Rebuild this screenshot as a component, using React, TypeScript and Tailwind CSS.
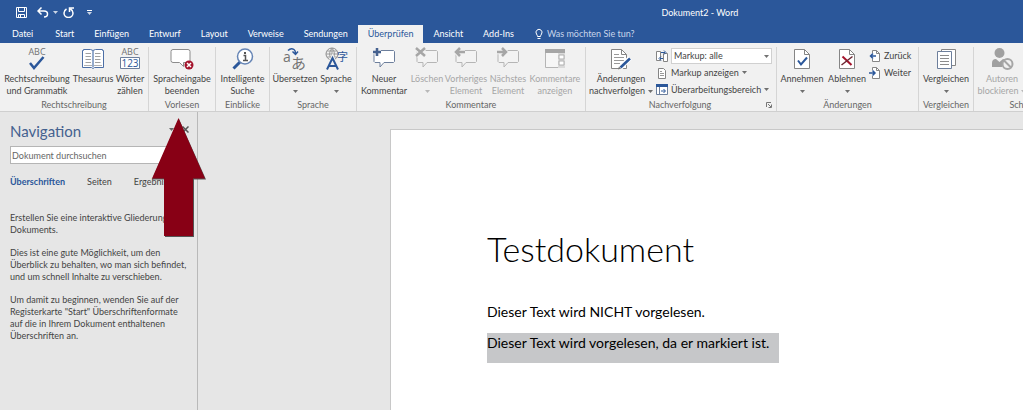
import type { ReactNode } from 'react'

const BLUE = '#2b579a'
const GREY = '#737373'
const CJK = '"Noto Sans CJK JP", sans-serif'

function Caret({ className = '' }: { className?: string }) {
    return (
        <svg viewBox="0 0 5 3" className={`h-[3px] w-[5px] shrink-0 opacity-75 ${className}`} fill="currentColor" aria-hidden="true">
            <path d="M0 0h5L2.5 3z" />
        </svg>
    )
}

function Icon({ children, w = 24, h = 24 }: { children: ReactNode; w?: number; h?: number }) {
    return (
        <svg width={w} height={h} viewBox={`0 0 ${w} ${h}`} fill="none" className="shrink-0 overflow-visible" aria-hidden="true">
            {children}
        </svg>
    )
}

/* ---------- ribbon icons ---------- */

function SpellingIcon() {
    return (
        <Icon>
            <text x="12" y="8" textAnchor="middle" fontSize="9" fill={GREY} className="font-['Open_Sans',sans-serif]">ABC</text>
            <path d="M5 16l4 5 9.500-11" stroke={BLUE} strokeWidth="2.500" />
        </Icon>
    )
}

function ThesaurusIcon() {
    return (
        <Icon>
            <path d="M1.500 3.500h1v-1h7l2.500 1 2.500-1h7v1h1v17h-9l-1.500 1-1.500-1h-9z" fill="#fff" stroke="#4d6fa6" />
            <path d="M12 4v16" stroke={BLUE} />
            <path d="M4.500 6.500H10M4.500 9.500H10M4.500 12.500H10M4.500 15.500H10M14 6.500h5.500M14 9.500h5.500M14 12.500h5.500M14 15.500h5.500" stroke="#a0a0a0" />
            <path d="M3 18.500h8M13 18.500h8" stroke="#b0b0b0" />
        </Icon>
    )
}

function WordCountIcon() {
    return (
        <Icon>
            <text x="12" y="8" textAnchor="middle" fontSize="9" fill={GREY} className="font-['Open_Sans',sans-serif]">ABC</text>
            <path d="M2.500 10.500h19v11h-19z" fill="#fff" stroke="#6d7f9c" />
            <text x="12" y="20" textAnchor="middle" fontSize="10" fill={BLUE} className="font-['Open_Sans',sans-serif]">123</text>
        </Icon>
    )
}

function SpeechIcon() {
    return (
        <Icon>
            <path d="M3 2.500h15q2 0 2 2v9q0 2-2 2h-4.500v4l-4-4H3q-2 0-2-2v-9q0-2 2-2z" fill="#fff" stroke="#8c8c8c" />
            <circle cx="19" cy="18" r="4.500" fill="#a4142c" />
            <path d="M17 16l4 4M21 16l-4 4" stroke="#fff" strokeWidth="1.500" />
        </Icon>
    )
}

function LookupIcon() {
    return (
        <Icon>
            <path d="M2.500 21.500l7-7" stroke={BLUE} strokeWidth="3" />
            <circle cx="14" cy="9.500" r="7.500" fill="#fff" stroke="#6685b5" strokeWidth="1.500" />
            <path d="M12.500 8.500h2V13M12 13.500h5" stroke="#555" strokeWidth="1.500" />
            <path d="M13 5h2v2h-2z" fill="#555" />
        </Icon>
    )
}

function TranslateIcon() {
    return (
        <Icon>
            <text x="0" y="15" fontSize="14" fill={GREY} className="font-['Open_Sans',sans-serif]">a</text>
            <text x="8" y="22" fontSize="15" fill={GREY} fontFamily={CJK}>あ</text>
            <path d="M5 3.500q3-3 6-1 1.500 1 1.500 4M9.500 4.500l3 3 2.500-3" stroke={BLUE} strokeWidth="1.500" />
        </Icon>
    )
}

function LanguageIcon() {
    return (
        <Icon>
            <circle cx="8" cy="7" r="6" stroke="#8c8c8c" />
            <path d="M2 7h12M3 4h10M3 10h10M8 1v12M8 1q-5 6 0 12M8 1q5 6 0 12" stroke="#9c9c9c" />
            <path d="M3 23L8.500 11 14 23M5.500 19h6" stroke="#f1f1f1" strokeWidth="4" />
            <path d="M3 22.500L8.500 11 14 22.500M5 19h7" stroke={BLUE} strokeWidth="2" />
            <text x="13" y="14" fontSize="11" fill={BLUE} fontFamily={CJK}>字</text>
        </Icon>
    )
}

function CommentIcon({ mark }: { mark: 'new' | 'delete' | 'previous' | 'next' }) {
    const active = mark === 'new'
    const marks = {
        new: 'M5 1v8M1 5h8',
        delete: 'M1 1l9 8M10 1L1 9',
        previous: 'M11 5H2M6 1L2 5l4 4',
        next: 'M1 5h9M6 1l4 4-4 4',
    }
    return (
        <Icon>
            <path d="M4 3.500h17.500l1 1v10l-1 1H12l-4 4.500v-4.500H3l-1-1v-10z" fill={active ? '#fff' : '#f3f3f3'} stroke={active ? '#6d7f9c' : '#b5b5b5'} />
            <path d={marks[mark]} stroke="#f1f1f1" strokeWidth="4.500" />
            <path d={marks[mark]} stroke={active ? '#45618f' : '#a6a6a6'} strokeWidth="2.500" />
        </Icon>
    )
}

function ShowCommentsIcon() {
    return (
        <Icon>
            <path d="M2.500 2.500h19v18h-19z" fill="#f6f6f6" stroke="#b5b5b5" />
            <path d="M2 2h20v4H2z" fill="#a6a6a6" />
            <path d="M15 6h7v15h-7z" fill="#dadada" />
            <path d="M16 8h5v4h-5zM16 14h5v4h-5z" fill="#fff" stroke="#b0b0b0" />
        </Icon>
    )
}

function Sheet() {
    return (
        <>
            <path d="M4.500 2.500h10l5 5v14h-15z" fill="#fff" stroke="#858585" />
            <path d="M14.500 2.500v5h5" stroke="#858585" />
        </>
    )
}

function TrackIcon() {
    return (
        <Icon>
            <path d="M2.500 2.500h10l5 5v14h-15z" fill="#fff" stroke="#858585" />
            <path d="M12.500 2.500v5h5" stroke="#858585" />
            <path d="M5 7.500h5M5 10.500h10M5 13.500h10M5 16.500h6" stroke="#999" />
            <path d="M11 21l10-10" stroke="#fff" strokeWidth="5" />
            <path d="M11.500 20.500l9.500-9" stroke={BLUE} strokeWidth="2.500" />
            <path d="M9 22.500l1-3 2 2z" fill="#777" />
        </Icon>
    )
}

function AcceptIcon() {
    return (
        <Icon>
            <Sheet />
            <path d="M8 13.500l3 4 6-7" stroke={BLUE} strokeWidth="2" />
        </Icon>
    )
}

function RejectIcon() {
    return (
        <Icon>
            <Sheet />
            <path d="M7.500 9.500l9 8.500" stroke="#a4142c" strokeWidth="2" />
            <path d="M17.500 9.500l-11 8.500" stroke="#6b2632" strokeWidth="1.500" />
        </Icon>
    )
}

function CompareIcon() {
    return (
        <Icon>
            <path d="M7.500 2.500H21.500v16h-14z" fill="#fff" stroke="#858585" />
            <path d="M3.500 4.500h14v17h-14z" fill="#fff" stroke="#6d7f9c" />
            <path d="M6 8.500h9M6 11.500h9M6 14.500h9M6 17.500h9" stroke="#8c8c8c" />
        </Icon>
    )
}

function BlockIcon() {
    return (
        <Icon>
            <circle cx="9.500" cy="6" r="5" fill="#a0a0a0" />
            <path d="M2 20v-4q0-4 4-4l3.500 3 3.500-3q2 0 3 1.500L12 20z" fill="#a0a0a0" />
            <circle cx="17.500" cy="17" r="5" fill="#f1f1f1" stroke="#a6a6a6" strokeWidth="2" />
            <path d="M14 13.500l7 7" stroke="#a6a6a6" strokeWidth="2" />
        </Icon>
    )
}

function MarkupIcon() {
    return (
        <Icon w={12} h={12}>
            <path d="M.5 1.500h4v9h-4zM7.500 3.500h4v8h-4z" fill="#fff" stroke="#858585" />
            <path d="M5 2.500h4M8 .5l2 2-2 2M7 8.500H4M5 6.500l-2 2 2 2" stroke={BLUE} />
        </Icon>
    )
}

function ShowMarkupIcon() {
    return (
        <Icon w={12} h={12}>
            <path d="M2.500 1.500h5l2 2v8h-7z" fill="#fff" stroke="#858585" />
            <path d="M4 4.500h2M4 6.500h4M4 8.500h4" stroke="#999" />
        </Icon>
    )
}

function PaneIcon() {
    return (
        <Icon w={12} h={12}>
            <path d="M.5.5h11v10H.5z" fill="#fff" stroke="#6d7f9c" />
            <path d="M0 0h12v3H0z" fill={BLUE} />
            <path d="M3.500 3v8" stroke="#6d7f9c" />
            <path d="M5 7h4M7.500 5l2 2-2 2" stroke={BLUE} />
        </Icon>
    )
}

function StepIcon({ back = false }: { back?: boolean }) {
    return (
        <Icon w={12} h={12}>
            <path d="M3.500 3V.5h4l3 3v8h-7V9" fill="#fff" stroke="#858585" />
            <path d="M7.500.5v3h3" stroke="#858585" />
            <path d={back ? 'M7 6H1.500M4 3.500L1.500 6 4 8.500' : 'M0 6h5.500M3.500 3.500L6 6 3.500 8.500'} stroke={BLUE} strokeWidth="1.500" />
        </Icon>
    )
}

/* ---------- ribbon parts ---------- */

function Group({ label, className, launcher, children }: { label: string; className: string; launcher?: boolean; children: ReactNode }) {
    return (
        <section className={`flex shrink-0 flex-col border-r border-[#d5d5d5] ${className}`}>
            <div className="flex h-[52px]">{children}</div>
            <div className="flex h-3 items-center">
                <h2 className="flex-1 text-center leading-3 text-[#666]">{label}</h2>
                {launcher && (
                    <button type="button" aria-label={`${label} Optionen`} className="-ml-2 mr-1">
                        <svg viewBox="0 0 6 6" className="size-[6px]" fill="none" stroke="#777" aria-hidden="true">
                            <path d="M.5 5V.5H5M2 2l3 3M5.500 2.500v3h-3" />
                        </svg>
                    </button>
                )}
            </div>
        </section>
    )
}

interface BigButtonProps {
    icon: ReactNode
    top: string
    bottom?: string
    caret?: boolean
    disabled?: boolean
    className: string
}

function BigButton({ icon, top, bottom, caret, disabled, className }: BigButtonProps) {
    return (
        <button
            type="button"
            disabled={disabled}
            className={`flex shrink-0 flex-col items-center whitespace-nowrap leading-3 disabled:text-[#a6a6a6] ${className}`}
        >
            <span className="flex h-[26px]">{icon}</span>
            <span>{top}</span>
            <span className="flex h-3 items-center gap-[3px]">
                {bottom}
                {caret && <Caret />}
            </span>
        </button>
    )
}

function SmallButton({ icon, label, caret }: { icon: ReactNode; label: string; caret?: boolean }) {
    return (
        <button type="button" className="flex h-[17px] items-center gap-[3px] whitespace-nowrap">
            {icon}
            {label}
            {caret && <Caret />}
        </button>
    )
}

function Ribbon() {
    return (
        <div className="flex overflow-hidden border-b border-[#cfcfcf] bg-[#f1f1f1] pt-1 text-[#444]">
            <Group label="Rechtschreibung" className="w-[149px]">
                <BigButton className="w-[74px]" icon={<SpellingIcon />} top="Rechtschreibung" bottom="und Grammatik" />
                <BigButton className="w-[38px]" icon={<ThesaurusIcon />} top="Thesaurus" />
                <BigButton className="w-[36px]" icon={<WordCountIcon />} top="Wörter" bottom="zählen" />
            </Group>
            <Group label="Vorlesen" className="w-[67px]">
                <BigButton className="w-full" icon={<SpeechIcon />} top="Spracheingabe" bottom="beenden" />
            </Group>
            <Group label="Einblicke" className="w-[54px]">
                <BigButton className="w-full" icon={<LookupIcon />} top="Intelligente" bottom="Suche" />
            </Group>
            <Group label="Sprache" className="w-[87px]">
                <BigButton className="w-[50px]" icon={<TranslateIcon />} top="Übersetzen" caret />
                <BigButton className="w-[32px]" icon={<LanguageIcon />} top="Sprache" caret />
            </Group>
            <Group label="Kommentare" className="w-[229px]">
                <BigButton className="w-[54px]" icon={<CommentIcon mark="new" />} top="Neuer" bottom="Kommentar" />
                <BigButton className="w-[32px]" icon={<CommentIcon mark="delete" />} top="Löschen" caret disabled />
                <BigButton className="w-[46px]" icon={<CommentIcon mark="previous" />} top="Vorheriges" bottom="Element" disabled />
                <BigButton className="w-[38px]" icon={<CommentIcon mark="next" />} top="Nächstes" bottom="Element" disabled />
                <BigButton className="w-[56px]" icon={<ShowCommentsIcon />} top="Kommentare" bottom="anzeigen" disabled />
            </Group>
            <Group label="Nachverfolgung" className="w-[191px]" launcher>
                <BigButton className="w-[70px]" icon={<TrackIcon />} top="Änderungen" bottom="nachverfolgen" caret />
                <div className="flex flex-1 flex-col pr-1">
                    <div className="flex h-[17px] items-center gap-[3px]">
                        <MarkupIcon />
                        <div className="relative flex-1">
                            <select
                                aria-label="Markup"
                                className="block h-4 w-full appearance-none border border-[#d0d0d0] bg-white pl-[2px] leading-3"
                            >
                                <option>Markup: alle</option>
                            </select>
                            <Caret className="pointer-events-none absolute right-[3px] top-[7px]" />
                        </div>
                    </div>
                    <SmallButton icon={<ShowMarkupIcon />} label="Markup anzeigen" caret />
                    <SmallButton icon={<PaneIcon />} label="Überarbeitungsbereich" caret />
                </div>
            </Group>
            <Group label="Änderungen" className="w-[142px]">
                <BigButton className="w-[50px]" icon={<AcceptIcon />} top="Annehmen" caret />
                <BigButton className="w-[40px]" icon={<RejectIcon />} top="Ablehnen" caret />
                <div className="flex flex-col pl-[2px]">
                    <SmallButton icon={<StepIcon back />} label="Zurück" />
                    <SmallButton icon={<StepIcon />} label="Weiter" />
                </div>
            </Group>
            <Group label="Vergleichen" className="w-[55px]">
                <BigButton className="w-full" icon={<CompareIcon />} top="Vergleichen" caret />
            </Group>
            <Group label="Schützen" className="w-[108px]">
                <BigButton className="w-[56px]" icon={<BlockIcon />} top="Autoren" bottom="blockieren" caret disabled />
            </Group>
        </div>
    )
}

/* ---------- window header ---------- */

const tabs = ['Start', 'Einfügen', 'Entwurf', 'Layout', 'Verweise', 'Sendungen', 'Überprüfen', 'Ansicht', 'Add-Ins']

function TitleBar() {
    return (
        <div className="flex h-[25px] items-center pl-4">
            <div className="flex items-center">
                <button type="button" aria-label="Speichern">
                    <svg viewBox="0 0 11 11" className="size-[11px]" fill="none" stroke="#fff" aria-hidden="true">
                        <path d="M.5.5h10v10H.5zM2.500.5v4h6v-4M2.500 10.500v-3h6v3M4.500 8v2" />
                    </svg>
                </button>
                <button type="button" aria-label="Rückgängig" className="ml-[10px] flex items-center gap-1">
                    <svg viewBox="0 0 12 11" className="h-[11px] w-3" fill="none" stroke="#fff" strokeWidth="1.500" aria-hidden="true">
                        <path d="M4.500.5L1 4l3.500 3.500M1 4h6q3.500 0 3.500 3T7 10" />
                    </svg>
                    <Caret />
                </button>
                <button type="button" aria-label="Wiederholen" className="ml-[5px]">
                    <svg viewBox="0 0 11 11" className="size-[11px]" fill="none" stroke="#fff" strokeWidth="1.500" aria-hidden="true">
                        <path d="M3.500 2Q1 3.500 1 6a4.500 4.500 0 0 0 9 0q0-2.500-2.500-4M6.500 5V1H11" />
                    </svg>
                </button>
                <button type="button" aria-label="Symbolleiste anpassen" className="ml-[13px] flex flex-col gap-px">
                    <span className="h-px w-[5px] bg-white" />
                    <Caret />
                </button>
            </div>
            <div className="grow-2" />
            <h1 className="leading-3">Dokument2 - Word</h1>
            <div className="grow" />
        </div>
    )
}

function TabBar() {
    return (
        <nav className="flex h-[18px] whitespace-nowrap" aria-label="Menüband">
            <button type="button" className="mr-[2px] pl-3 pr-[10px]">Datei</button>
            {tabs.map((tab) => (
                <button
                    key={tab}
                    type="button"
                    className={tab === 'Überprüfen' ? 'bg-[#f1f1f1] px-[10px] text-[#2b579a]' : 'px-[10px]'}
                >
                    {tab}
                </button>
            ))}
            <button type="button" className="flex items-center gap-1 pl-[11px] text-[#c8d5ea]">
                <svg viewBox="0 0 8 12" className="h-3 w-2" fill="none" stroke="#fff" aria-hidden="true">
                    <path d="M2.500 8.500q0-1-1-2.500a3 3 0 1 1 5 0q-1 1.500-1 2.500zM2.500 10.500h3" />
                </svg>
                Was möchten Sie tun?
            </button>
        </nav>
    )
}

/* ---------- content ---------- */

function NavigationPane() {
    return (
        <aside className="relative w-[198px] shrink-0 border-r border-[#b9b9b9] pl-[10px] pr-2 pt-[9px] text-[#444]">
            <div className="flex justify-between">
                <h2 className="text-[15px] leading-5 text-[#44618f]">Navigation</h2>
                <div className="flex h-4 items-center gap-2">
                    <button type="button" aria-label="Optionen"><Caret /></button>
                    <button type="button" aria-label="Schließen">
                        <svg viewBox="0 0 7 7" className="size-[7px]" stroke="#555" strokeWidth="1.500" aria-hidden="true">
                            <path d="M.5.5l6 6M6.500.5l-6 6" />
                        </svg>
                    </button>
                </div>
            </div>
            <input
                type="search"
                aria-label="Dokument durchsuchen"
                placeholder="Dokument durchsuchen"
                className="mt-[5px] block h-[18px] w-full border border-[#b5b5b5] bg-white px-px placeholder:text-[#666]"
            />
            <div className="mt-3 flex gap-[22px] leading-3">
                <button type="button" className="font-bold text-[#2b579a]">Überschriften</button>
                <button type="button">Seiten</button>
                <button type="button">Ergebnisse</button>
            </div>
            <div className="mt-6 flex flex-col gap-[11px] whitespace-nowrap leading-3">
                <p>Erstellen Sie eine interaktive Gliederung Ihres<br />Dokuments.</p>
                <p>Dies ist eine gute Möglichkeit, um den<br />Überblick zu behalten, wo man sich befindet,<br />und um schnell Inhalte zu verschieben.</p>
                <p>Um damit zu beginnen, wenden Sie auf der<br />Registerkarte "Start" Überschriftenformate<br />auf die in Ihrem Dokument enthaltenen<br />Überschriften an.</p>
            </div>
            {/* pointer up to "Spracheingabe beenden" */}
            <svg viewBox="0 0 56 122" className="pointer-events-none absolute left-[151px] top-[5px] h-[122px] w-[56px]" aria-hidden="true">
                <path d="M28 2l27 60.500H43V120H14V62.500H1z" fill="#555" />
                <path d="M27.500 1L54 61.500H42V119H13V61.500H1z" fill="#880015" />
            </svg>
        </aside>
    )
}

function Page() {
    return (
        <main className="min-w-0 flex-1 pl-48 pt-[17px]">
            <article className="h-full border-l border-t border-[#c8c8c8] bg-white pl-24 text-[14px] text-black">
                <h1 className="pt-[97px] text-[34px] font-light leading-[44px]">Testdokument</h1>
                <p className="pt-[31px] leading-5">Dieser Text wird NICHT vorgelesen.</p>
                <p className="mt-[11px] w-fit bg-[#c6c7c9] pb-[10px] pr-[10px] leading-5">Dieser Text wird vorgelesen, da er markiert ist.</p>
            </article>
        </main>
    )
}

export default function App() {
    return (
        <div className="flex min-h-screen flex-col overflow-hidden bg-[#e6e6e6] font-['Lato',sans-serif] text-[9px]">
            <header>
                <div className="bg-[#2b579a] text-white">
                    <TitleBar />
                    <TabBar />
                </div>
                <Ribbon />
            </header>
            <div className="flex flex-1">
                <NavigationPane />
                <Page />
            </div>
        </div>
    )
}
